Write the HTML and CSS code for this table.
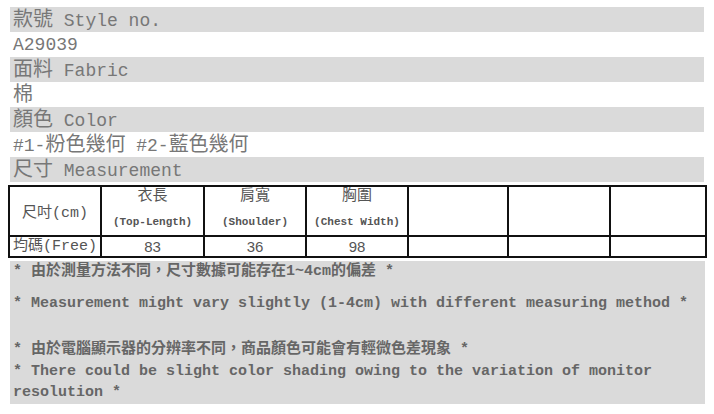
FILE: index.html
```html
<!DOCTYPE html>
<html lang="zh-Hant">
<head>
<meta charset="utf-8">
<title>Size</title>
<link rel="stylesheet" href="styles.css">
</head>
<body>
<div class="info">
  <div class="row shade"><span class="cj">款號</span> Style no.</div>
  <div class="row">A29039</div>
  <div class="row shade"><span class="cj">面料</span> Fabric</div>
  <div class="row"><span class="cj">棉</span></div>
  <div class="row shade"><span class="cj">顏色</span> Color</div>
  <div class="row">#1-<span class="cj">粉色幾何</span> #2-<span class="cj">藍色幾何</span></div>
  <div class="row shade"><span class="cj">尺寸</span> Measurement</div>
</div>
<table class="size">
  <colgroup>
    <col class="c1"><col class="c2"><col class="c3"><col class="c4"><col class="c5"><col class="c6"><col class="c7">
  </colgroup>
  <tr class="head">
    <td class="label">尺吋(cm)</td>
    <td><div class="zh">衣長</div><div class="en">(Top-Length)</div></td>
    <td><div class="zh">肩寬</div><div class="en">(Shoulder)</div></td>
    <td><div class="zh">胸圍</div><div class="en">(Chest Width)</div></td>
    <td></td><td></td><td></td>
  </tr>
  <tr class="data">
    <td class="label">均碼(Free)</td>
    <td>83</td><td>36</td><td>98</td><td></td><td></td><td></td>
  </tr>
</table>
<div class="notes">
  <p>* 由於測量方法不同，尺寸數據可能存在1~4cm的偏差 *</p>
  <p class="p2">* Measurement might vary slightly (1-4cm) with different measuring method *</p>
  <div class="p3">
    <p>* 由於電腦顯示器的分辨率不同，商品顏色可能會有輕微色差現象 *</p>
    <p>* There could be slight color shading owing to the variation of monitor resolution *</p>
  </div>
</div>
</body>
</html>
```
FILE: styles.css
```css
* { box-sizing: border-box; }
html, body { margin: 0; background: #fff; }
body {
  padding-top: 7px;
  font-family: "Liberation Mono", "Noto Sans CJK TC", monospace;
}
.info { margin-left: 10px; width: 694px; }
.row {
  height: 25px;
  padding-left: 3px;
  font-size: 18px;
  line-height: 27px;
  color: #777;
  white-space: pre;
}
.shade { background: #dadada; }
.cj {
  display: inline-block;
  font-size: 20px;
  line-height: 22px;
  font-family: "Noto Sans CJK TC", sans-serif;
}

.size {
  margin: 3px 0 0 8px;
  width: 697px;
  table-layout: fixed;
  border-collapse: collapse;
  color: #555;
  font-family: "Liberation Mono", "Noto Sans CJK TC", monospace;
}
.c1 { width: 92px; }
.c2 { width: 103px; }
.c3 { width: 102px; }
.c4 { width: 102px; }
.c5 { width: 100px; }
.c6 { width: 102px; }
.c7 { width: 96px; }
.size td {
  border: 2px solid #111;
  padding: 0;
  text-align: center;
  white-space: nowrap;
}
.head td { height: 50px; vertical-align: top; }
.size td.label { vertical-align: middle; font-size: 15px; font-family: "Liberation Mono", "Noto Sans CJK TC", monospace; }
.zh { font-size: 15px; line-height: 20px; }
.en { font-size: 11px; line-height: 20px; margin-top: 5px; font-weight: bold; }
.data td { height: 21px; font-size: 15px; line-height: 17px; font-family: "Liberation Sans", "Noto Sans CJK TC", sans-serif; }

.notes {
  margin: 3px 0 0 10px;
  width: 695px;
  background: #dadada;
  padding-left: 3px;
  font: bold 15px/22px "Liberation Mono", "Noto Sans CJK TC", monospace;
  color: #666;
}
.notes p { margin: 0; }
.notes .p2 { margin-top: 10px; }
.notes .p3 { margin-top: 24px; line-height: 21.5px; }
```
